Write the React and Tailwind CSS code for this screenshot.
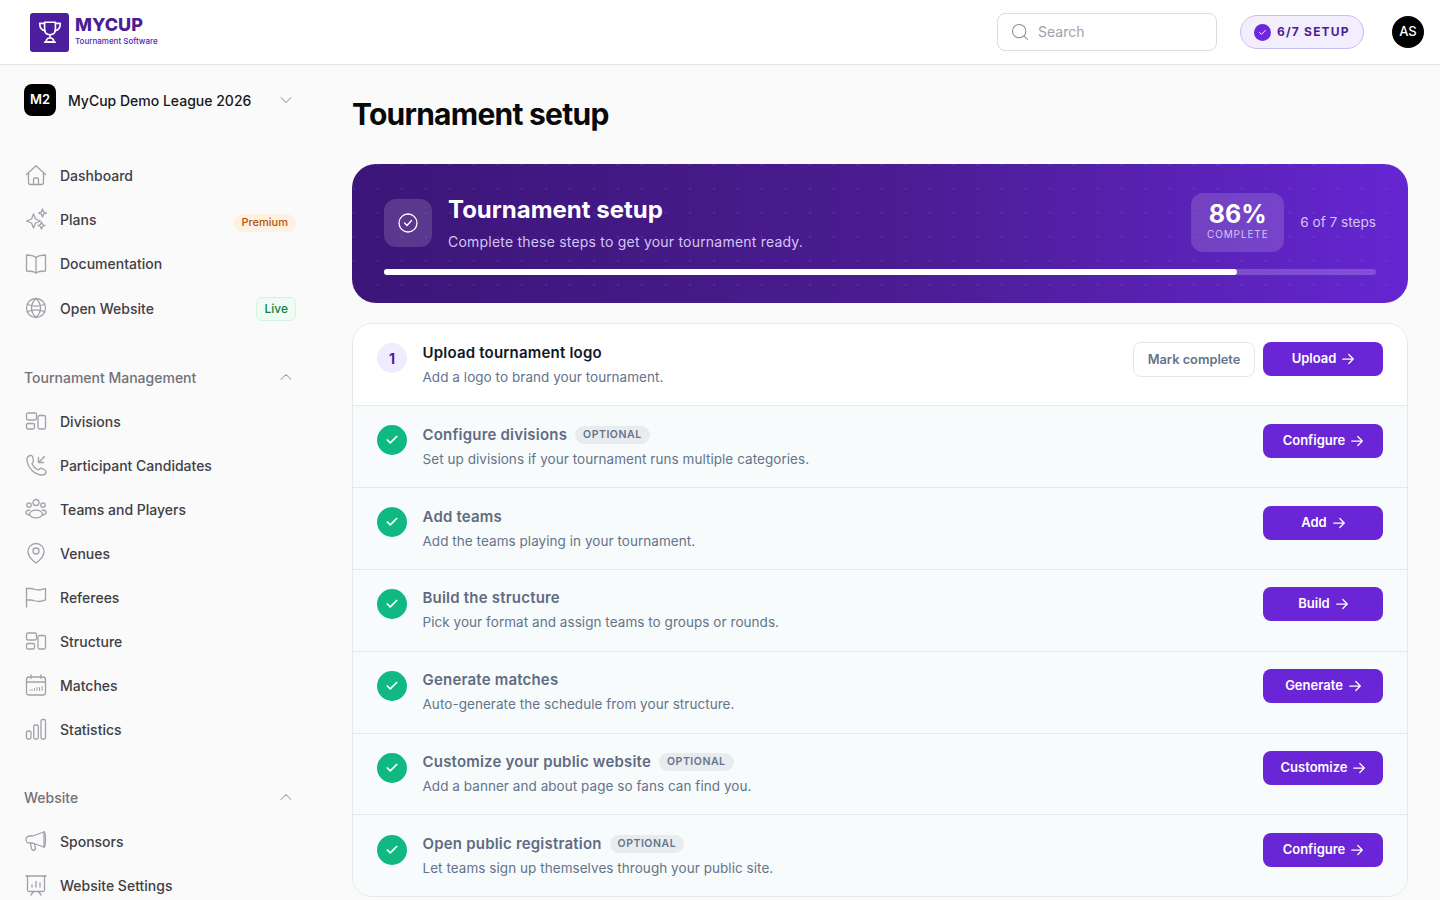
import { Check, ChevronDown, ChevronUp, Search } from 'lucide-react'

const Ico = ({ children }) => (
  <svg viewBox="0 0 24 24" className="w-6 h-6 shrink-0 text-[#a1a1aa]" fill="none" stroke="currentColor" strokeWidth="1.3" strokeLinecap="round" strokeLinejoin="round">
    {children}
  </svg>
)

const HomeIcon = () => <Ico><path d="M2.500 11.500 12 2.800l9.500 8.700" /><path d="M4.500 10v9.500a2 2 0 0 0 2 2h11a2 2 0 0 0 2-2V10" /><path d="M9.500 21.500v-5a1.500 1.500 0 0 1 1.500-1.500h2a1.500 1.500 0 0 1 1.500 1.500v5" /></Ico>
const SparkIcon = () => <Ico><path d="M9.500 7 11.500 12l5 2-5 2-2 5-2-5-5-2 5-2z" /><path d="M18.500 2l1.100 2.900 2.900 1.100-2.900 1.100-1.100 2.900-1.100-2.900-2.900-1.100 2.900-1.100z" /><path d="M17.500 15l1 2.500 2.500 1-2.500 1-1 2.500-1-2.500-2.500-1 2.500-1z" /></Ico>
const BookIcon = () => <Ico><path d="M12 6.500c-2-1.500-5-2.500-9.500-2.500v16c4.500 0 7.500.5 9.500 2 2-1.500 5-2 9.500-2V4c-4.500 0-7.500 1-9.500 2.500z" /><path d="M12 6.500V22" /></Ico>
const GlobeIcon = () => <Ico><circle cx="12" cy="12" r="9.500" /><path d="M12 2.500c-6 5.500-6 13.500 0 19 6-5.500 6-13.500 0-19z" /><path d="M3.500 8.500c5 2 12 2 17 0M3.500 15.500c5-2 12-2 17 0" /></Ico>
const LayoutIcon = () => <Ico><rect x="2.500" y="4" width="10" height="7" rx="1.500" /><rect x="2.500" y="14.500" width="8" height="5.500" rx="1.500" /><rect x="14" y="6.500" width="7.500" height="13.500" rx="1.500" /></Ico>
const PhoneIcon = () => <Ico><path d="M6.500 2.500c-2.500.5-4 2.500-3.500 5.500 1 6.500 6.500 13 14 14 2.500.3 4.500-.5 5-2.500.3-1.200-.3-2-1.200-2.500l-2.800-1.500c-1-.5-1.800-.2-2.500.5l-1 1c-3-1.200-5.300-3.500-6.500-6.500l1-1.200c.6-.7.7-1.400.3-2.300L8.600 3.800c-.4-.9-1.100-1.500-2.100-1.300z" /><path d="M20.500 3.500l-6 6M14.500 4.500v5h5" /></Ico>
const TeamIcon = () => <Ico><circle cx="12" cy="5.500" r="3" /><circle cx="5" cy="8" r="2.200" /><circle cx="19" cy="8" r="2.200" /><ellipse cx="12" cy="17" rx="6.500" ry="3.800" /><path d="M5.500 13C3.500 13 2 14.200 2 15.500c0 1.200 1.200 2.200 3.200 2.500M18.500 13c2 0 3.500 1.200 3.500 2.500 0 1.200-1.200 2.200-3.200 2.500" /></Ico>
const PinIcon = () => <Ico><path d="M12 2.500c-4.500 0-8 3.500-8 8 0 4.500 4.500 9 8 11.500 3.500-2.500 8-7 8-11.500 0-4.500-3.500-8-8-8z" /><circle cx="12" cy="10" r="3" /></Ico>
const FlagIcon = () => <Ico><path d="M2.500 22V3.500" /><path d="M2.500 3.500h4c3.500 0 4.500 1.500 8 1.500 3 0 5-.8 7-1.500v11.500c-2 .7-4 1.500-7 1.500-3.500 0-4.500-1.500-8-1.500h-4" /></Ico>
const CalIcon = () => <Ico><rect x="2.500" y="4" width="19" height="18" rx="2.500" /><path d="M2.500 9h19M7 2v3.500M17 2v3.500" /><path d="M8 17.500v-1M10.500 17.500v-2M13 17.500v-3M15.500 17.500v-3M18 17.500v-4M6 17.500v-.5" strokeWidth="1" /></Ico>
const BarsIcon = () => <Ico><rect x="2.500" y="14" width="4.500" height="8" rx="1.500" /><rect x="9.800" y="8" width="4.500" height="14" rx="1.500" /><rect x="17" y="2.500" width="4.500" height="19.500" rx="1.500" /></Ico>
const MegaIcon = () => <Ico><path d="M20 3 8.500 7H5.500a3.500 3.500 0 0 0 0 7h3L20 18z" /><path d="M20 2.500c1 1 1.500 3 1.500 8s-.5 7-1.500 8" /><path d="M6.500 14l1 5.500a2 2 0 0 0 4-.5l-1-4" /></Ico>
const BoardIcon = () => <Ico><path d="M2 3h20" /><path d="M3.500 3v14a1.500 1.500 0 0 0 1.500 1.500h14a1.500 1.500 0 0 0 1.500-1.500V3" /><path d="M8 14v-2M12 14V8.500M16 14v-4M7 22l2.500-3.500M17 22l-2.500-3.500" /></Ico>

const NavItem = ({ icon, label, children, className = 'h-11' }) => (
  <div className={`flex items-center gap-3 ${className}`}>
    {icon}
    <span className="text-[14px] font-medium text-[#3f3f46]">{label}</span>
    <div className="ml-auto">{children}</div>
  </div>
)

const SectionHead = ({ label, className = '' }) => (
  <div className={`flex items-center justify-between h-11 ${className}`}>
    <span className="text-[14px] font-medium text-[#71717a]">{label}</span>
    <ChevronUp size={20} strokeWidth={1.25} className="text-[#a1a1aa]" />
  </div>
)

const steps = [
  { n: 2, title: 'Configure divisions', optional: true, desc: 'Set up divisions if your tournament runs multiple categories.', action: 'Configure', row: 'h-[82px] pt-[18px]', dot: 'mt-[1px]' },
  { n: 3, title: 'Add teams', desc: 'Add the teams playing in your tournament.', action: 'Add', row: 'h-[82px] pt-[18px]', dot: 'mt-[1px]' },
  { n: 4, title: 'Build the structure', desc: 'Pick your format and assign teams to groups or rounds.', action: 'Build', row: 'h-[82px] pt-[17px]', dot: 'mt-[2px]' },
  { n: 5, title: 'Generate matches', desc: 'Auto-generate the schedule from your structure.', action: 'Generate', row: 'h-[82px] pt-[17px]', dot: 'mt-[2px]' },
  { n: 6, title: 'Customize your public website', optional: true, desc: 'Add a banner and about page so fans can find you.', action: 'Customize', row: 'h-[81px] pt-[17px]', dot: 'mt-[2px]' },
  { n: 7, title: 'Open public registration', optional: true, desc: 'Let teams sign up themselves through your public site.', action: 'Configure', row: 'h-[81px] pt-[18px]', dot: 'mt-[2px]', last: true },
]

const ActionBtn = ({ label }) => (
  <button className="w-[120px] h-[34px] rounded-lg bg-[#6a26d6] text-white text-[13px] font-semibold flex items-center justify-center gap-[6px]">
    {label}
    <svg viewBox="0 0 12 12" className="w-3 h-3" fill="none" stroke="currentColor" strokeWidth="1.25" strokeLinecap="round" strokeLinejoin="round">
      <path d="M.7 6h10.600M6.800 1.500 11.300 6l-4.500 4.500" />
    </svg>
  </button>
)

export default function App() {
  return (
    <div className="h-screen overflow-hidden flex flex-col bg-[#fafafa] font-['Inter',sans-serif]">
      {/* Header */}
      <header className="h-[65px] shrink-0 bg-white border-b border-[#e4e4e7] flex items-center pl-[30px] pr-4">
        <div className="flex items-center gap-[6px]">
          <div className="w-[39px] h-[39px] rounded-[3px] bg-[#4c1d9c] flex items-center justify-center">
            <svg viewBox="0 0 24 24" className="w-[26px] h-[26px] text-white" fill="none" stroke="currentColor" strokeWidth="1.5" strokeLinejoin="round" strokeLinecap="round">
              <path d="M7 3h10v6.500c0 3-2 5-5 5s-5-2-5-5z" />
              <path d="M7 4H2.500c0 4 1.500 6.500 5 7M17 4h4.500c0 4-1.500 6.500-5 7" />
              <path d="M12 14.500v3M8.500 21c0-2 1.500-3.500 3.500-3.500s3.500 1.500 3.500 3.500zM7 21.500h10" />
            </svg>
          </div>
          <div className="flex flex-col -mt-[3px]">
            <span className="text-[18px] leading-[20px] font-extrabold text-[#4c1d95]">MYCUP</span>
            <span className="text-[8px] leading-[12px] font-medium text-[#5b21b6]">Tournament Software</span>
          </div>
        </div>
        <div className="ml-auto flex items-center w-[220px] h-[38px] px-[12px] gap-2 rounded-lg border border-[#dcdce0] bg-white">
          <Search size={20} strokeWidth={1.25} className="text-[#8a8a93]" />
          <span className="-mt-[1px] text-[14px] text-[#a1a1aa]">Search</span>
        </div>
        <div className="ml-[23px] w-[124px] h-[34px] rounded-full bg-[#f3eefd] border border-[#cdbdf0] flex items-center pl-[13px] gap-[6px]">
          <span className="w-[17px] h-[17px] rounded-full bg-[#6d28d9] flex items-center justify-center">
            <Check size={9} strokeWidth={2.5} className="text-white" />
          </span>
          <span className="text-[12px] font-bold tracking-[0.1em] text-[#4c1d95]">6/7 SETUP</span>
        </div>
        <div className="ml-7 w-8 h-8 rounded-full bg-black text-white text-[13px] font-medium flex items-center justify-center">AS</div>
      </header>

      <div className="flex flex-1 min-h-0">
        {/* Sidebar */}
        <aside className="w-[320px] shrink-0 pl-6 pr-6 pt-[19px]">
          <div className="flex items-center gap-3 h-8">
            <div className="w-8 h-8 rounded-lg bg-black text-white text-[13px] font-semibold flex items-center justify-center">M2</div>
            <span className="text-[14px] font-medium text-[#18181b]">MyCup Demo League 2026</span>
            <ChevronDown size={20} strokeWidth={1.25} className="ml-auto text-[#a1a1aa]" />
          </div>

          <nav className="mt-[37px]">
            <NavItem icon={<HomeIcon />} label="Dashboard" />
            <NavItem icon={<SparkIcon />} label="Plans">
              <span className="flex items-center h-[18px] px-2 mt-[7px] rounded-full bg-[#fdf1e1] text-[11px] font-medium text-[#b45309]">Premium</span>
            </NavItem>
            <NavItem icon={<BookIcon />} label="Documentation" />
            <NavItem icon={<GlobeIcon />} label="Open Website" className="h-[46px]">
              <span className="flex items-center h-6 px-[7px] mt-[2px] rounded-md bg-[#effcf4] border border-[#d3f3e0] text-[12px] font-medium text-[#15803d]">Live</span>
            </NavItem>
          </nav>

          <SectionHead label="Tournament Management" className="mt-[24px]" />
          <NavItem icon={<LayoutIcon />} label="Divisions" />
          <NavItem icon={<PhoneIcon />} label="Participant Candidates" />
          <NavItem icon={<TeamIcon />} label="Teams and Players" />
          <NavItem icon={<PinIcon />} label="Venues" />
          <NavItem icon={<FlagIcon />} label="Referees" />
          <NavItem icon={<LayoutIcon />} label="Structure" />
          <NavItem icon={<CalIcon />} label="Matches" />
          <NavItem icon={<BarsIcon />} label="Statistics" />

          <SectionHead label="Website" className="mt-[24px]" />
          <NavItem icon={<MegaIcon />} label="Sponsors" />
          <NavItem icon={<BoardIcon />} label="Website Settings" />
        </aside>

        {/* Main */}
        <main className="flex-1 min-w-0 pl-8 pr-8 pt-[29px]">
          <h1 className="text-[30px] leading-[40px] font-bold tracking-[-0.025em] text-[#09090b]">Tournament setup</h1>

          <section className="relative mt-[30px] h-[139px] rounded-[24px] overflow-hidden px-8 pt-[29px] bg-gradient-to-r from-[#3b1678] via-[#4a1c90] to-[#6526d2]">
            <div className="absolute inset-0 bg-[radial-gradient(rgba(255,255,255,0.07)_1px,transparent_1px)] bg-[length:24px_24px] bg-[position:-10px_-11px]"></div>
            <div className="relative flex items-center h-[59px]">
              <div className="w-12 h-12 rounded-xl bg-white/15 flex items-center justify-center mt-[1px]">
                <svg viewBox="0 0 24 24" className="w-6 h-6 text-white" fill="none" stroke="currentColor" strokeWidth="1.3" strokeLinecap="round" strokeLinejoin="round">
                  <circle cx="12" cy="12" r="9" />
                  <path d="m8.500 12 2.500 2.500 4.500-5" />
                </svg>
              </div>
              <div className="ml-4 flex flex-col">
                <span className="text-[24px] leading-[32px] font-bold text-white">Tournament setup</span>
                <span className="mt-[6px] text-[14px] leading-[20px] tracking-[0.015em] text-[#d6c4f5]">Complete these steps to get your tournament ready.</span>
              </div>
              <div className="ml-auto w-[93px] h-[59px] pb-[3px] rounded-xl bg-white/15 flex flex-col items-center justify-center">
                <span className="text-[25px] leading-[25px] font-bold text-white">86%</span>
                <span className="text-[10px] leading-[14px] font-normal tracking-[0.09em] text-[#d6c4f5]">COMPLETE</span>
              </div>
              <span className="ml-4 text-[13.6px] text-[#d6c4f5]">6 of 7 steps</span>
            </div>
            <div className="relative mt-[17px] h-[6px] rounded-full bg-white/20">
              <div className="h-full w-[86%] rounded-full bg-white"></div>
            </div>
          </section>

          <section className="mt-[20px] rounded-[20px] border border-[#e5e9ec] bg-white overflow-hidden">
            <div className="h-[82px] border-b border-[#e5e9ec] flex items-start pt-[18px] pl-6 pr-6 bg-white">
              <div className="mt-[1px] w-[30px] h-[30px] rounded-full bg-[#f0ebfd] text-[#4c1d95] text-[14px] font-bold flex items-center justify-center">1</div>
              <div className="ml-[15.5px] flex flex-col">
                <span className="text-[15px] leading-[22px] font-semibold tracking-[0.2px] text-[#0f172a]">Upload tournament logo</span>
                <span className="mt-[3px] text-[13.5px] leading-[20px] tracking-[0.05px] text-[#64748b]">Add a logo to brand your tournament.</span>
              </div>
              <button className="ml-auto mr-2 w-[122px] h-[35px] rounded-lg bg-white border border-[#e5e7eb] text-[12.8px] font-semibold text-[#64748b]">Mark complete</button>
              <ActionBtn label="Upload" />
            </div>
            {steps.map((s) => (
              <div key={s.n} className={`${s.row} ${s.last ? '' : 'border-b border-[#e5e9ec]'} flex items-start pl-6 pr-6 bg-[#f8fbfb]`}>
                <div className={`${s.dot} w-[30px] h-[30px] rounded-full bg-[#10b981] flex items-center justify-center`}>
                  <Check size={14} strokeWidth={3} className="text-white" />
                </div>
                <div className="ml-[15.5px] flex flex-col">
                  <div className="flex items-center gap-2 h-[22px]">
                    <span className="text-[15px] leading-[22px] font-semibold tracking-[0.2px] text-[#5f6b82]">{s.title}</span>
                    {s.optional && <span className="h-[18px] px-2 rounded-full bg-[#e8ecef] text-[10.5px] leading-[18px] font-semibold tracking-[0.05em] text-[#64748b]">OPTIONAL</span>}
                  </div>
                  <span className="mt-[3px] text-[13.5px] leading-[20px] tracking-[0.05px] text-[#64748b]">{s.desc}</span>
                </div>
                <div className="ml-auto"><ActionBtn label={s.action} /></div>
              </div>
            ))}
          </section>
        </main>
      </div>
    </div>
  )
}
